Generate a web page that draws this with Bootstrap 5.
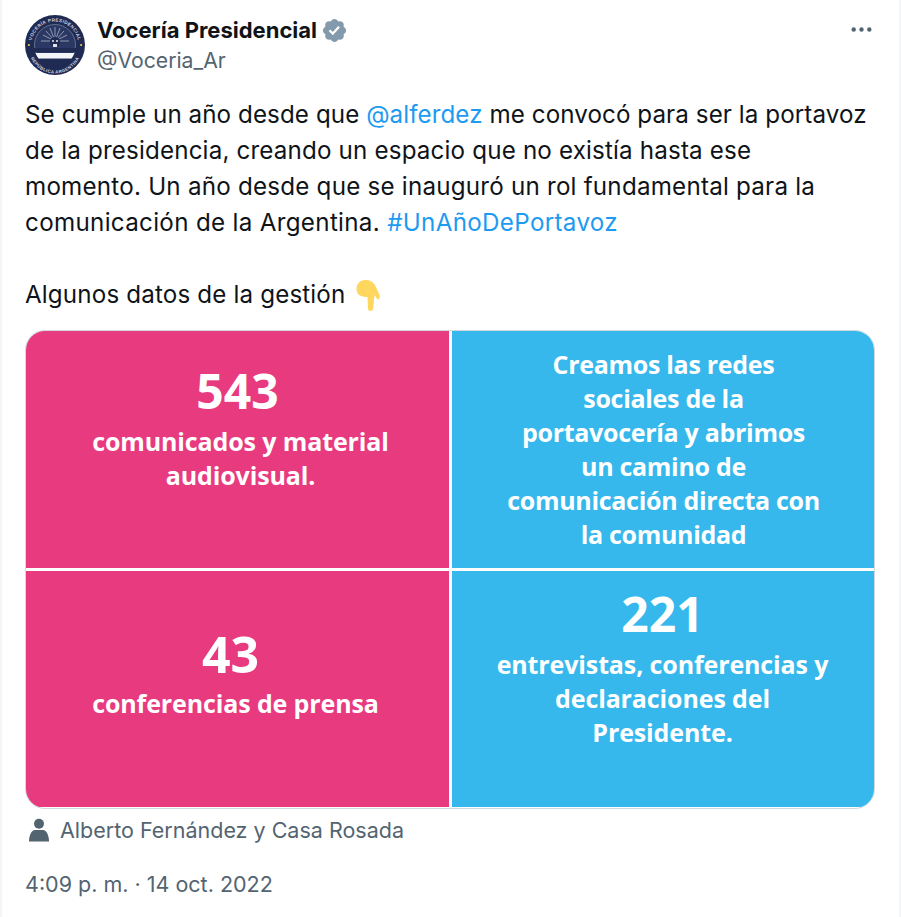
<!DOCTYPE html>
<html lang="es">
<head>
<meta charset="utf-8">
<title>Vocería Presidencial</title>
<link href="https://cdn.jsdelivr.net/npm/bootstrap@5.3.0/dist/css/bootstrap.min.css" rel="stylesheet">
<style>
html,body{margin:0;background:#fff;}
.tw-frame{width:901px;height:917px;overflow:hidden;padding:15px 24px 0 23px;border-left:2px solid #f3f5f6;border-right:2px solid #f3f5f6;margin:0;font-family:Inter,"Liberation Sans",sans-serif;color:#0f1419;box-sizing:border-box;}
.tw-avatar{width:60px;height:60px;flex:none;display:block;}
.tw-head{height:60px;}
.tw-names{margin-left:12px;}
.tw-name{font-size:22px;font-weight:700;line-height:30px;}
.tw-handle{font-size:21.2px;line-height:30px;color:#536471;}
.tw-dots{margin-top:2px;margin-right:1px;}
.tw-body{margin-top:22px;font-size:24.2px;line-height:36px;white-space:nowrap;}
.tw-body a{color:#1d9bf0;text-decoration:none;}
.tw-l1{letter-spacing:.07px;}
.tw-l2{letter-spacing:.16px;}
.tw-l3{letter-spacing:.215px;}
.tw-l4{letter-spacing:.31px;}
.tw-l6{letter-spacing:.15px;}
.tw-emoji{vertical-align:-9px;margin-left:4px;}
.tw-media{margin-top:17px;height:479px;border:1px solid #cfd9de;border-radius:20px;overflow:hidden;display:grid;grid-template-columns:423px 423px;grid-template-rows:237px 236px;gap:3px;background:#fff;width:850px;}
.tw-cell{color:#fff;text-align:center;font-family:"Open Sans","Noto Sans",sans-serif;font-weight:700;font-size:25px;line-height:34px;letter-spacing:-.12px;white-space:nowrap;}
.tw-pink{background:#e83a7e;}
.tw-blue{background:#37b8ec;}
.tw-num{font-size:48px;line-height:56px;letter-spacing:0;}
.tw-c1{padding-top:32px;padding-left:6px;}
.tw-c1 .tw-num{margin-bottom:5px;padding-right:6px;}
.tw-c2{padding-top:16px;letter-spacing:-.3px;}
.tw-c3{padding-top:55px;padding-right:4px;}
.tw-c3 .tw-num{margin-bottom:4px;padding-right:10px;font-size:50px;}
.tw-c4{padding-top:15px;padding-right:2px;}
.tw-c4 .tw-num{margin-bottom:5px;}
.tw-tag{margin-top:7px;font-size:21.5px;line-height:28px;color:#536471;}
.tw-tag svg{margin-right:11px;margin-left:4px;}
.tw-time{margin-top:26px;font-size:21.5px;line-height:28px;color:#536471;}
</style>
</head>
<body>
<div class="tw-frame">
  <div class="d-flex align-items-start tw-head">
    <svg class="tw-avatar" viewBox="0 0 60 60" role="img" aria-label="Escudo de Vocería Presidencial">
      <defs><path id="arcTop" d="M6.500 30a23.500 23.500 0 0 1 47 0"/><path id="arcBot" d="M3.500 32a26.500 26.500 0 0 0 53 0"/></defs>
      <circle cx="30" cy="30" r="30" fill="#1f2b52"/>
      <circle cx="30" cy="30" r="20.500" fill="#2b3863" stroke="#8f98b2" stroke-width=".6"/>
      <g stroke="#aab2c8" stroke-width=".8">
        <path d="M30 26V12M30 26l-5-13M30 26l5-13M30 26l-9-10M30 26l9-10M30 26l-12-6M30 26l12-6M30 26H16M30 26h14"/>
      </g>
      <circle cx="30" cy="27" r="5.200" fill="#1f2b52"/>
      <circle cx="28" cy="26" r="1" fill="#e8eaf0"/><circle cx="32" cy="26" r="1" fill="#e8eaf0"/>
      <path d="M28 29h4v3h-4z" fill="#dfe2ea"/>
      <rect x="9" y="33" width="42" height="4" fill="#1f2b52"/>
      <path d="M10.500 38h39a20.500 20.500 0 0 1-3 5.500h-33a20.500 20.500 0 0 1-3-5.500z" fill="#f4f5f8"/>
      <path d="M14 44h32a20.500 20.500 0 0 1-32 0z" fill="#1f2b52"/>
      <circle cx="3.900" cy="30" r="1.100" fill="#e9c94b"/><circle cx="56.100" cy="30" r="1.100" fill="#e9c94b"/>
      <text font-size="4.600" font-weight="700" fill="#cfd4e0" font-family="Liberation Sans,sans-serif" letter-spacing=".4"><textPath href="#arcTop" startOffset="50%" text-anchor="middle">VOCERÍA PRESIDENCIAL</textPath></text>
      <text font-size="4.400" font-weight="700" fill="#cfd4e0" font-family="Liberation Sans,sans-serif" letter-spacing=".4"><textPath href="#arcBot" startOffset="50%" text-anchor="middle">REPÚBLICA ARGENTINA</textPath></text>
    </svg>
    <div class="tw-names">
      <div class="tw-name d-flex align-items-center">Vocería Presidencial
        <svg class="ms-1" width="27" height="27" viewBox="0 0 24 24" aria-label="Verificada"><path fill="#829aab" d="M22.250 12c0-1.430-.880-2.670-2.190-3.340.460-1.390.200-2.900-.810-3.910s-2.520-1.270-3.910-.810c-.660-1.310-1.910-2.190-3.340-2.190s-2.670.880-3.330 2.190c-1.400-.460-2.910-.200-3.920.810s-1.260 2.520-.800 3.910c-1.310.670-2.200 1.910-2.200 3.340s.890 2.670 2.200 3.340c-.460 1.390-.210 2.900.800 3.910s2.520 1.260 3.910.810c.670 1.310 1.910 2.190 3.340 2.190s2.680-.880 3.340-2.190c1.390.450 2.900.200 3.910-.810s1.270-2.520.810-3.910c1.310-.670 2.190-1.910 2.190-3.340zm-11.710 4.200L6.800 12.460l1.410-1.420 2.260 2.260 4.800-5.230 1.470 1.360-6.200 6.770z"/></svg>
      </div>
      <div class="tw-handle">@Voceria_Ar</div>
    </div>
    <svg class="ms-auto tw-dots" width="25" height="25" viewBox="0 0 24 24" aria-label="Más"><g fill="#536471"><circle cx="4.500" cy="12" r="2.100"/><circle cx="12" cy="12" r="2.100"/><circle cx="19.500" cy="12" r="2.100"/></g></svg>
  </div>

  <div class="tw-body"><span class="tw-l1">Se cumple un año desde que <a href="#">@alferdez</a> me convocó para ser la portavoz</span><br><span class="tw-l2">de la presidencia, creando un espacio que no existía hasta ese</span><br><span class="tw-l3">momento. Un año desde que se inauguró un rol fundamental para la</span><br><span class="tw-l4">comunicación de la Argentina. <a href="#">#UnAñoDePortavoz</a></span><br><br><span class="tw-l6">Algunos datos de la gestión</span> <svg class="tw-emoji" width="25" height="32" viewBox="0 0 25 32" aria-label="👇"><path fill="#ffd75e" d="M9 0c5 0 8 2 10 5l4.500 10c1 4-1.500 6-3 3L18.500 15l-1.500 14c-.2 2.500-4.800 2.500-5 0l-.5-12C5 17 .5 15 .5 9 .5 4 4 0 9 0z"/></svg></div>

  <div class="tw-media">
    <div class="tw-cell tw-pink tw-c1"><div class="tw-num">543</div>comunicados y material<br>audiovisual.</div>
    <div class="tw-cell tw-blue tw-c2">Creamos las redes<br>sociales de la<br>portavocería y abrimos<br>un camino de<br>comunicación directa con<br>la comunidad</div>
    <div class="tw-cell tw-pink tw-c3"><div class="tw-num">43</div>conferencias de prensa</div>
    <div class="tw-cell tw-blue tw-c4"><div class="tw-num">221</div>entrevistas, conferencias y<br>declaraciones del<br>Presidente.</div>
  </div>

  <div class="tw-tag d-flex align-items-center">
    <svg width="20" height="24" viewBox="0 0 20 24" aria-hidden="true"><circle cx="10" cy="5.800" r="5" fill="#536471"/><path fill="#536471" d="M0 23.500c0-6 2.500-11.500 6-11.500h8c3.500 0 6 5.500 6 11.500z"/></svg>
    Alberto Fernández y Casa Rosada
  </div>
  <div class="tw-time">4:09 p. m. · 14 oct. 2022</div>
</div>
<script src="https://cdn.jsdelivr.net/npm/bootstrap@5.3.0/dist/js/bootstrap.bundle.min.js"></script>
</body>
</html>
